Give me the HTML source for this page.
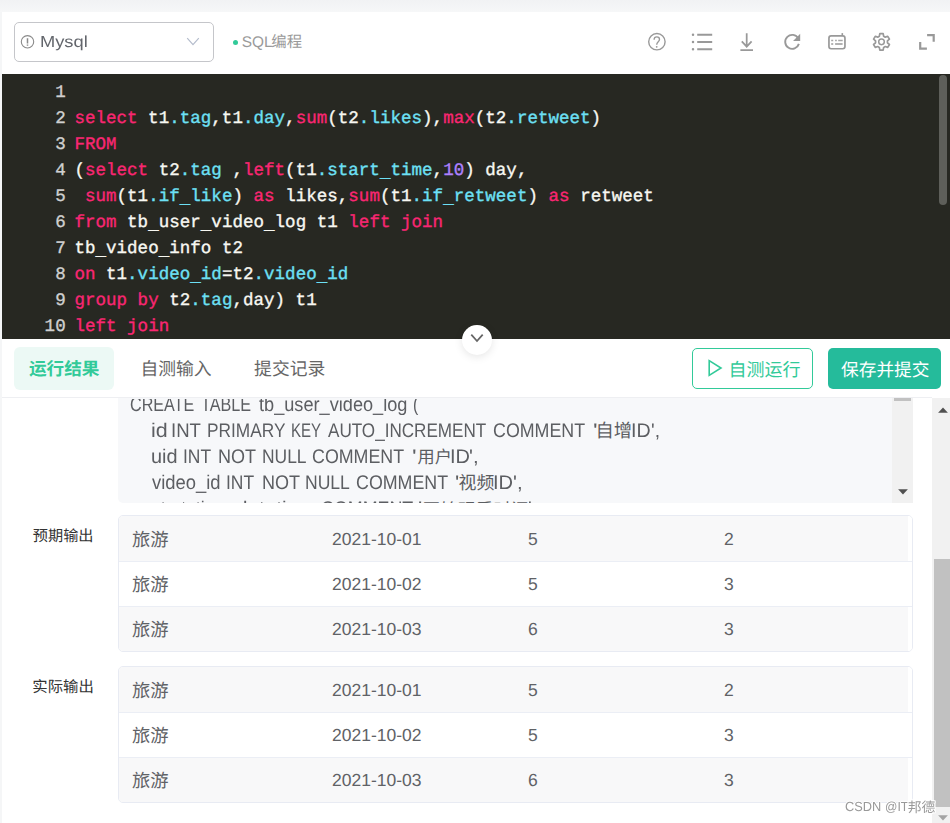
<!DOCTYPE html>
<html lang="zh">
<head>
<meta charset="utf-8">
<title>SQL</title>
<style>
*{box-sizing:border-box;margin:0;padding:0}
html,body{width:950px;height:823px;overflow:hidden}
body{position:relative;text-rendering:geometricPrecision;background:#f5f6f7;font-family:"Liberation Sans",sans-serif;color:#606266}
.abs{position:absolute}
svg.cj{display:block;position:absolute;overflow:visible}
svg.cj text{font-family:"Liberation Sans","Noto Sans CJK SC",sans-serif}
#topgrad{left:0;top:0;width:950px;height:12px;background:linear-gradient(#f1f2f4,#f6f7f8)}
#panel{left:2px;top:12px;width:948px;height:811px;background:#fff}
/* header */
#sel{left:14px;top:22px;width:200px;height:40px;border:1px solid #c5c6ca;border-radius:5px;background:#fff}
#mysql{left:41px;top:32.2px;width:60px;height:22px;font-size:16px;line-height:22px;color:#63666c;white-space:nowrap}
.w{position:absolute;top:0;display:block;transform-origin:0 0}
#dot{left:232.8px;top:39.7px;width:5.3px;height:5.3px;border-radius:50%;background:#32ca99}
#sql{left:241.8px;top:33.6px;font-size:15.4px;line-height:18px;color:#9a9a9a;white-space:nowrap}
/* editor */
#ed{left:2px;top:74px;width:948px;height:264.5px;background:#272822;overflow:hidden}
#code{left:0;top:6px;letter-spacing:.03px;font-family:"Liberation Mono",monospace;font-size:17.5px;line-height:26px;color:#f8f8f2;white-space:pre;-webkit-text-stroke:0.35px currentColor}
#code .ln{display:inline-block;width:63.7px;text-align:right;color:#d0d0d0;margin-right:8.7px}
.k{color:#f92672}.p{color:#6de0f5}.n{color:#ae81ff}
.u{position:relative;top:1.7px}
#edthumb{left:937px;top:1px;width:8px;height:130px;border-radius:4px;background:#5e5f5a}
#fold{left:462px;top:324.7px;width:30px;height:30px;border-radius:50%;background:#fff;box-shadow:0 2px 8px rgba(0,0,0,.10)}
/* tabs */
#tabact{left:14px;top:347px;width:99.5px;height:42.5px;border-radius:6px;background:#ecf9f5}
#tabline{left:2px;top:396.5px;width:930px;height:1px;background:#eeeff2}
#btn1{left:692px;top:348px;width:121px;height:41px;border:1px solid #32ca99;border-radius:5px;background:#fff}
#btn2{left:828px;top:348px;width:113px;height:41px;border-radius:5px;background:#25bb9b}
/* content */
#pre{left:118px;top:397.5px;width:795px;height:105.5px;background:#f7f8fa;border-radius:0 0 0 5px;overflow:hidden}
.pl{position:absolute;left:0;width:760px;height:26px;font-size:19.8px;line-height:26px;color:#5c5e62;white-space:pre}
.pl .w{position:absolute;top:0;display:block;transform-origin:0 0}
#prebar{left:774px;top:0;width:21px;height:105.5px;background:#f1f1f1}
#prethumb{left:776px;top:0;width:17px;height:3.5px;background:#c1c1c1}
.tbl{left:118px;width:795px;height:137px;border:1px solid #e8ebf3;border-radius:5px;overflow:hidden;background:#fff}
.tbl .row{position:relative;height:45px;border-bottom:1px solid #ebeef5;font-size:17.5px;line-height:20px;color:#606266}
.tbl .row:first-child{height:46px}
.tbl .row:last-child{height:44px;border-bottom:none}
.tbl .row.s{background:linear-gradient(90deg,#f8f8f9 789px,#fff 789px)}
.tbl .row span{position:absolute;top:12.7px}
.c2{left:213px}.c3{left:409px}.c4{left:605px}
/* scrollbars */
#vbar{left:932px;top:397.5px;width:18px;height:425.5px;background:#f1f1f1}
#vthumb{left:934px;top:559px;width:16px;height:248px;background:#c1c1c1}
#wm{left:845px;top:797.6px;width:70px;height:18px;font-size:13.2px;line-height:18px;color:#999;white-space:nowrap;text-shadow:-1px 0 #fff,1px 0 #fff,0 -1px #fff,0 1px #fff}
</style>
</head>
<body>
<div id="topgrad" class="abs"></div>
<div id="panel" class="abs"></div>

<!-- header -->
<div id="sel" class="abs"></div>
<svg class="abs" style="left:20px;top:35px" width="15" height="15" viewBox="0 0 15 15" fill="none" stroke="#8a8a8a" stroke-width="1.1"><circle cx="7.5" cy="6.8" r="6.2"/><path d="M7.5 3.3v5.2M7.5 9.4v1.3" stroke-width="1.5"/></svg>
<div id="mysql" class="abs"><span class="w" style="left:-1.00px;transform:scaleX(1.1422);">Mysql</span></div>
<svg class="abs" style="left:186px;top:36px" width="14" height="11" viewBox="0 0 14 11" fill="none" stroke="#b4bccc" stroke-width="1.2"><path d="M1.2 2.2L7 8.6L12.8 2.2"/></svg>
<div id="dot" class="abs"></div>
<div id="sql" class="abs">SQL</div>
<svg class="cj" width="33" height="16" style="left:271px;top:34px;"><text x="0.3" y="13.2" font-size="15.4" fill="#999">编程</text></svg>

<!-- toolbar icons -->
<svg class="abs" style="left:640px;top:28px" width="300" height="28" viewBox="640 28 300 28" fill="none" stroke="#999" stroke-width="1.5">
  <!-- help -->
  <circle cx="656.9" cy="41.7" r="8.2" stroke-width="1.4"/>
  <path d="M654.1 39.7C654.1 38 655.3 36.9 656.8 36.9S659.5 38 659.5 39.4C659.5 41.7 656.7 41.7 656.7 44.7" stroke-width="1.35"/>
  <circle cx="656.7" cy="46.8" r=".9" fill="#999" stroke="none"/>
  <!-- list -->
  <path d="M697.2 34.8H712.2M697.2 42H712.2M697.2 49.2H712.2" stroke-width="1.9"/>
  <path d="M693 34.8h.01M693 42h.01M693 49.2h.01" stroke-width="2.5" stroke-linecap="round"/>
  <!-- download -->
  <path d="M746.7 33.2V46.6M741.8 41.4l4.9 5.3l4.9-5.3M740.4 50.1H753" stroke-width="1.75"/>
  <!-- refresh -->
  <path d="M798.3 38.4A7 7 0 1 0 798.9 43.9" stroke-width="1.9"/>
  <path d="M800.2 33.8V40.9H793.1Z" fill="#999" stroke="none"/>
  <!-- keyboard -->
  <rect x="828.95" y="35.95" width="16" height="12.8" rx="2.2" stroke-width="1.7"/>
  <path d="M842.3 33.1v3" stroke-width="1.6"/>
  <path d="M831.2 40.6h2M835.1 40.6h1.7M838.2 40.6h4.5" stroke-width="1.5" stroke="#a6a6a6"/>
  <path d="M831.2 44h2M835.1 44h7.5" stroke-width="1.7"/>
  <!-- gear -->
  <g transform="translate(881.5 41.85) scale(1.02)">
   <path d="M-2.11 -5.51L-1.63 -8.04L1.63 -8.04L2.11 -5.51L3.71 -4.59L6.14 -5.43L7.78 -2.60L5.83 -0.92L5.83 0.92L7.78 2.60L6.14 5.43L3.71 4.59L2.11 5.51L1.63 8.04L-1.63 8.04L-2.11 5.51L-3.71 4.59L-6.14 5.43L-7.78 2.60L-5.83 0.92L-5.83 -0.92L-7.78 -2.60L-6.14 -5.43L-3.71 -4.59Z" stroke-width="1.65" stroke-linejoin="round"/>
   <circle r="2.75" stroke-width="1.45"/>
  </g>
  <!-- fullscreen -->
  <path d="M927.1 35.2H933.7V41.8M920.2 42.1V48.7H926.9" stroke-width="2.2"/>
</svg>

<!-- editor -->
<div id="ed" class="abs">
<div id="code" class="abs"><span class="ln">1</span>
<span class="ln">2</span><span class="k">select</span> t1<span class="p">.tag</span>,t1<span class="p">.day</span>,<span class="k">sum</span>(t2<span class="p">.likes</span>),<span class="k">max</span>(t2<span class="p">.retweet</span>)
<span class="ln">3</span><span class="k">FROM</span>
<span class="ln">4</span>(<span class="k">select</span> t2<span class="p">.tag</span> ,<span class="k">left</span>(t1<span class="p">.start<span class="u">_</span>time</span>,<span class="n">10</span>) day,
<span class="ln">5</span> <span class="k">sum</span>(t1<span class="p">.if<span class="u">_</span>like</span>) <span class="k">as</span> likes,<span class="k">sum</span>(t1<span class="p">.if<span class="u">_</span>retweet</span>) <span class="k">as</span> retweet
<span class="ln">6</span><span class="k">from</span> tb<span class="u">_</span>user<span class="u">_</span>video<span class="u">_</span>log t1 <span class="k">left</span> <span class="k">join</span>
<span class="ln">7</span>tb<span class="u">_</span>video<span class="u">_</span>info t2
<span class="ln">8</span><span class="k">on</span> t1<span class="p">.video<span class="u">_</span>id</span>=t2<span class="p">.video<span class="u">_</span>id</span>
<span class="ln">9</span><span class="k">group</span> <span class="k">by</span> t2<span class="p">.tag</span>,day) t1
<span class="ln">10</span><span class="k">left</span> <span class="k">join</span>
</div>
<div id="edthumb" class="abs"></div>
</div>
<div id="fold" class="abs"></div>
<svg class="abs" style="left:469px;top:332px" width="16" height="12" viewBox="0 0 16 12" fill="none" stroke="#666" stroke-width="1.8"><path d="M2.3 2.7L8 9L13.7 2.7"/></svg>

<!-- tabs -->
<div id="tabact" class="abs"></div>
<svg class="cj" width="73" height="21" style="left:28px;top:358px;"><text x="0.9" y="16.9" font-size="17.65" font-weight="700" fill="#32ca99">运行结果</text></svg>
<svg class="cj" width="73" height="22" style="left:140px;top:357px;"><text x="0.5" y="18" font-size="17.8" fill="#666">自测输入</text></svg>
<svg class="cj" width="73" height="21" style="left:254px;top:358px;"><text x="0.1" y="17.2" font-size="17.8" fill="#666">提交记录</text></svg>
<div id="btn1" class="abs"></div>
<svg class="abs" style="left:706px;top:357px" width="19" height="22" viewBox="706 357 19 22" fill="none" stroke="#32ca99" stroke-width="1.6" stroke-linejoin="miter"><path d="M709.2 360.6L721 368L709.2 375.4Z"/></svg>
<svg class="cj" width="74" height="22" style="left:728px;top:358px;"><text x="0.4" y="17.8" font-size="18" fill="#32ca99">自测运行</text></svg>
<div id="btn2" class="abs"></div>
<svg class="cj" width="91" height="22" style="left:840px;top:358px;"><text x="1" y="17.9" font-size="17.7" fill="#fff">保存并提交</text></svg>
<div id="tabline" class="abs"></div>

<!-- description block -->
<div id="pre" class="abs">
<div class="abs" style="left:0;top:0;width:774px;height:105.5px;clip-path:inset(1.5px 0 0 0)"><div class="pl" style="top:-5.57px"><span class="w" style="left:12.08px;transform:scaleX(0.8157);">CREATE</span><span class="w" style="left:82.64px;transform:scaleX(0.8188);">TABLE</span><span class="w" style="left:140.52px;transform:scaleX(0.9180);">tb_user_video_log</span><span class="w" style="left:294.82px;transform:scaleX(0.8000);">(</span></div><div class="pl" style="top:20.53px"><span class="w" style="left:32.86px;transform:scaleX(1.0851);">id</span><span class="w" style="left:53.48px;transform:scaleX(0.9388);">INT</span><span class="w" style="left:89.08px;transform:scaleX(0.8735);">PRIMARY</span><span class="w" style="left:173.26px;transform:scaleX(0.7614);">KEY</span><span class="w" style="left:209.87px;transform:scaleX(0.8640);">AUTO_INCREMENT</span><span class="w" style="left:374.89px;transform:scaleX(0.9015);">COMMENT</span><span class="w" style="left:474.76px;transform:scaleX(1.2367);">'</span><span class="w" style="left:513.19px;transform:scaleX(0.9926);">ID</span><span class="w" style="left:533.02px;transform:scaleX(0.9697);">',</span></div><div class="pl" style="top:46.63px"><span class="w" style="left:33.01px;transform:scaleX(1.0058);">uid</span><span class="w" style="left:65.19px;transform:scaleX(0.8814);">INT</span><span class="w" style="left:99.82px;transform:scaleX(0.9115);">NOT</span><span class="w" style="left:143.97px;transform:scaleX(0.8813);">NULL</span><span class="w" style="left:193.89px;transform:scaleX(0.9015);">COMMENT</span><span class="w" style="left:294.06px;transform:scaleX(1.2367);">'</span><span class="w" style="left:331.55px;transform:scaleX(1.0103);">ID</span><span class="w" style="left:351.26px;transform:scaleX(1.0313);">',</span></div><div class="pl" style="top:72.73px"><span class="w" style="left:33.84px;transform:scaleX(0.9308);">video_id</span><span class="w" style="left:108.09px;transform:scaleX(0.8814);">INT</span><span class="w" style="left:143.52px;transform:scaleX(0.9115);">NOT</span><span class="w" style="left:187.46px;transform:scaleX(0.8875);">NULL</span><span class="w" style="left:237.69px;transform:scaleX(0.9015);">COMMENT</span><span class="w" style="left:336.87px;transform:scaleX(1.1243);">'</span><span class="w" style="left:374.84px;transform:scaleX(1.0161);">ID</span><span class="w" style="left:394.66px;transform:scaleX(1.0313);">',</span></div><div class="pl" style="top:98.83px"><span class="w" style="left:33.81px;transform:scaleX(0.8854);">start_time</span><span class="w" style="left:117.63px;transform:scaleX(1.0440);">datetime</span><span class="w" style="left:203.09px;transform:scaleX(0.9025);">COMMENT</span><span class="w" style="left:300.37px;transform:scaleX(1.1243);">'</span><span class="w" style="left:410.49px;transform:scaleX(1.0005);">',</span></div></div><div class="abs" style="left:0;top:.5px;width:774px;height:105px;overflow:hidden"><svg class="cj" width="39" height="20" style="left:477px;top:23px;"><text x="0.5" y="16.3" font-size="18.3" fill="#5c5e62">自增</text></svg><svg class="cj" width="35" height="20" style="left:299px;top:49px;"><text x="0.5" y="16.3" font-size="17.2" fill="#5c5e62">用户</text></svg><svg class="cj" width="38" height="20" style="left:340px;top:75px;"><text x="0.6" y="16.4" font-size="17.9" fill="#5c5e62">视频</text></svg><svg class="cj" width="109" height="20" style="left:304px;top:101px;"><text x="0.6" y="16.5" font-size="17.7" fill="#5c5e62">开始观看时间</text></svg></div>
<div id="prebar" class="abs"></div>
<div id="prethumb" class="abs"></div>
<svg class="abs" style="left:779px;top:91.5px" width="12" height="7" viewBox="0 0 12 7"><path d="M1.1.2h9.8L6 5.5z" fill="#505050"/></svg>
</div>

<!-- expected -->
<svg class="cj" width="63" height="18" style="left:32px;top:527px;"><text x="0.8" y="14.2" font-size="15.2" fill="#333">预期输出</text></svg>
<div class="tbl abs" style="top:515px">
<div class="row s"><svg class="cj" width="38" height="21" style="left:13px;top:13px;"><text x="0" y="16.8" font-size="18.3" fill="#606266">旅游</text></svg><span class="c2" style="top:12.7px">2021-10-01</span><span class="c3" style="top:12.7px">5</span><span class="c4" style="top:12.7px">2</span></div>
<div class="row"><svg class="cj" width="38" height="21" style="left:13px;top:12px;"><text x="0" y="17.3" font-size="18.3" fill="#606266">旅游</text></svg><span class="c2" style="top:12.2px">2021-10-02</span><span class="c3" style="top:12.2px">5</span><span class="c4" style="top:12.2px">3</span></div>
<div class="row s"><svg class="cj" width="38" height="21" style="left:13px;top:12px;"><text x="0" y="17.3" font-size="18.3" fill="#606266">旅游</text></svg><span class="c2" style="top:12.2px">2021-10-03</span><span class="c3" style="top:12.2px">6</span><span class="c4" style="top:12.2px">3</span></div>
</div>

<!-- actual -->
<svg class="cj" width="63" height="17" style="left:32px;top:679px;"><text x="0.3" y="13.3" font-size="15.4" fill="#333">实际输出</text></svg>
<div class="tbl abs" style="top:666px">
<div class="row s"><svg class="cj" width="38" height="21" style="left:13px;top:13px;"><text x="0" y="16.8" font-size="18.3" fill="#606266">旅游</text></svg><span class="c2" style="top:12.7px">2021-10-01</span><span class="c3" style="top:12.7px">5</span><span class="c4" style="top:12.7px">2</span></div>
<div class="row"><svg class="cj" width="38" height="21" style="left:13px;top:12px;"><text x="0" y="17.3" font-size="18.3" fill="#606266">旅游</text></svg><span class="c2" style="top:12.2px">2021-10-02</span><span class="c3" style="top:12.2px">5</span><span class="c4" style="top:12.2px">3</span></div>
<div class="row s"><svg class="cj" width="38" height="21" style="left:13px;top:12px;"><text x="0" y="17.3" font-size="18.3" fill="#606266">旅游</text></svg><span class="c2" style="top:12.2px">2021-10-03</span><span class="c3" style="top:12.2px">6</span><span class="c4" style="top:12.2px">3</span></div>
</div>

<!-- page scrollbar -->
<div id="vbar" class="abs"></div>
<div id="vthumb" class="abs"></div>
<svg class="abs" style="left:937px;top:407px" width="12" height="6" viewBox="0 0 12 6"><path d="M1.1 5.7h9.8L6 .4z" fill="#505050"/></svg>
<svg class="abs" style="left:937px;top:815px" width="12" height="6" viewBox="0 0 12 6"><path d="M1.1.3h9.8L6 5.5z" fill="#a3a3a3"/></svg>

<!-- watermark -->
<div id="wm" class="abs"><span class="w" style="left:-0.25px;transform:scaleX(0.9704);">CSDN</span><span class="w" style="left:40.04px;transform:scaleX(0.9248);">@IT</span></div>
<svg class="cj" width="30" height="15" style="left:907px;top:800px;filter:drop-shadow(1px 0 0 #fff) drop-shadow(-1px 0 0 #fff) drop-shadow(0 1px 0 #fff) drop-shadow(0 -1px 0 #fff)"><text x="0.7" y="12.3" font-size="13.8" fill="#999">邦德</text></svg>
</body>
</html>
